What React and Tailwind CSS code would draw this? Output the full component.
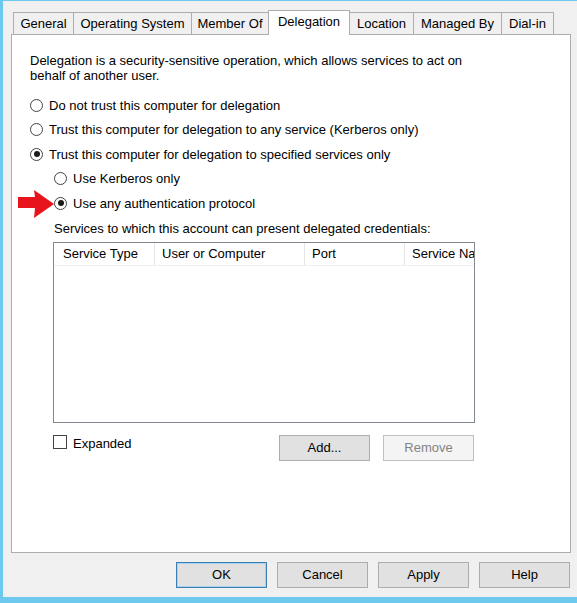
import React from "react";

const tabs = ["General", "Operating System", "Member Of", "Delegation", "Location", "Managed By", "Dial-in"];
const tabWidths = [61, 119, 78, 82, 65, 89, 53];

function Radio({ checked, label }) {
  return (
    <div className="flex items-center h-[24.5px]">
      <span className="w-[13px] h-[13px] shrink-0 rounded-full border border-[#444444] bg-white flex items-center justify-center">
        {checked && <span className="w-[6px] h-[6px] rounded-full bg-[#1a1a1a]" />}
      </span>
      <span className="ml-[6px]">{label}</span>
    </div>
  );
}

function Button({ label, primary, disabled }) {
  return (
    <div
      className={`w-[91px] h-[26px] shrink-0 flex items-center justify-center border ${
        disabled
          ? "bg-[#f4f4f4] border-[#bfbfbf] text-[#838383]"
          : primary
          ? "bg-[#e1e1e1] border-[#3c7fb1] shadow-[inset_0_0_0_1px_#a9d0ee]"
          : "bg-[#e1e1e1] border-[#adadad]"
      }`}
    >
      {label}
    </div>
  );
}

export default function App() {
  return (
    <div
      className="w-[577px] h-[603px] bg-[#6cc8ec] pl-[3px] pt-[1px] pb-[6px] text-[13px] text-black"
      style={{ fontFamily: '"Liberation Sans", Arial, sans-serif' }}
    >
      <div className="w-full h-full bg-[#f0f0f0] flex flex-col">
        {/* tabs */}
        <div className="flex items-end ml-[10px] mt-[9px] h-[24px] relative z-10 whitespace-nowrap">
          {tabs.map((t, i) =>
            t === "Delegation" ? (
              <div
                key={t}
                style={{ width: tabWidths[i] }}
                className="h-[25px] -mb-px -mr-px bg-white border border-[#adadad] border-b-0 flex items-center justify-center pb-[2px]"
              >
                {t}
              </div>
            ) : (
              <div
                key={t}
                style={{ width: tabWidths[i] }}
                className="h-[22px] bg-[#f0f0f0] border border-[#adadad] border-b-0 -mr-px flex items-center justify-center"
              >
                {t}
              </div>
            )
          )}
        </div>

        {/* panel */}
        <div className="ml-[8px] w-[560px] h-[519px] bg-white border border-[#adadad] relative pl-[18px] pt-[18px]">
          <p className="leading-[15px] w-[450px]">
            Delegation is a security-sensitive operation, which allows services to act on behalf of another user.
          </p>
          <div className="mt-[10px]">
            <Radio label="Do not trust this computer for delegation" />
            <Radio label="Trust this computer for delegation to any service (Kerberos only)" />
            <Radio checked label="Trust this computer for delegation to specified services only" />
            <div className="pl-[24px]">
              <Radio label="Use Kerberos only" />
              <Radio checked label="Use any authentication protocol" />
            </div>
          </div>

          <div className="pl-[23px]">
            <div className="h-[26px] pl-[1px] flex items-center">Services to which this account can present delegated credentials:</div>
            <div className="w-[422px] h-[181px] border border-[#828790] bg-white overflow-hidden">
              <div className="flex h-[23px] border-b border-[#f0f0f0] whitespace-nowrap">
                <div className="w-[101px] shrink-0 flex items-center pl-[9px] border-r border-[#e5e5e5]">Service Type</div>
                <div className="w-[150px] shrink-0 flex items-center pl-[7px] border-r border-[#e5e5e5]">User or Computer</div>
                <div className="w-[100px] shrink-0 flex items-center pl-[7px] border-r border-[#e5e5e5]">Port</div>
                <div className="w-[100px] shrink-0 flex items-center pl-[7px]">Service Name</div>
              </div>
            </div>

            <div className="flex mt-[12px] w-[421px]">
              <div className="flex items-start">
                <span className="w-[14px] h-[14px] border border-[#444444] bg-white" />
                <span className="ml-[6px] -mt-[1px]">Expanded</span>
              </div>
              <div className="flex ml-auto gap-[13px]">
                <Button label="Add..." />
                <Button label="Remove" disabled />
              </div>
            </div>
          </div>

          {/* red arrow */}
          <svg className="absolute left-[5px] top-[154px]" width="38" height="30" viewBox="0 0 38 30">
            <polygon points="1,8 18,8 17,1 37,15 17,29 18,19 1,19" fill="#e8141c" />
          </svg>
        </div>

        {/* bottom buttons */}
        <div className="flex justify-end gap-[10px] pr-[7px] mt-[9px]">
          <Button label="OK" primary />
          <Button label="Cancel" />
          <Button label="Apply" />
          <Button label="Help" />
        </div>
      </div>
    </div>
  );
}
